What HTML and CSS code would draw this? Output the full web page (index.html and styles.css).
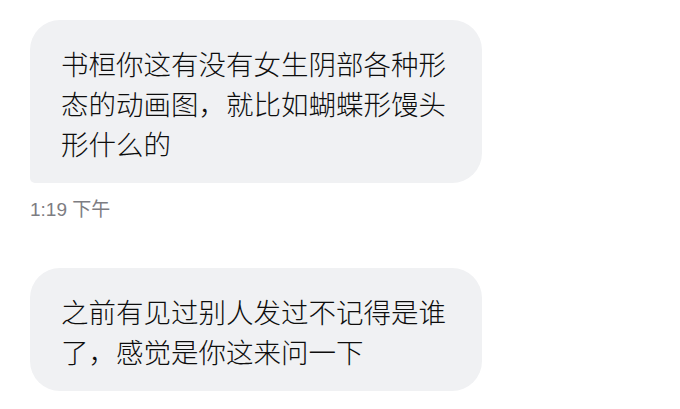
FILE: index.html
```html
<!DOCTYPE html>
<html lang="zh-CN">
<head>
  <meta charset="UTF-8">
  <title>聊天</title>
  <link rel="stylesheet" href="styles.css">
</head>
<body>
  <div class="chat">
    <div class="burbuja primera">书桓你这有没有女生阴部各种形态的动画图，就比如蝴蝶形馒头形什么的</div>
    <p class="hora">1:19 下午</p>
    <div class="burbuja">之前有见过别人发过不记得是谁了，感觉是你这来问一下</div>
  </div>
</body>
</html>
```

FILE: styles.css
```css
body {
  margin: 0;
  background: #ffffff;
  font-family: "Noto Sans CJK SC", "Noto Sans", sans-serif;
}

.chat {
  padding: 20px 30px;
}

.burbuja {
  box-sizing: border-box;
  width: 452px;
  padding: 23px 35px 20px 31px;
  background: #f0f1f3;
  color: #0d0d0d;
  font-size: 27.5px;
  font-weight: 300;
  line-height: 40px;
  border-radius: 30px;
}

.primera {
  border-bottom-left-radius: 5px;
}

.hora {
  margin: 16px 0 48px;
  color: #7d7d82;
  font-family: "Liberation Sans", "Noto Sans CJK SC", sans-serif;
  font-size: 19px;
  line-height: 21px;
}
```
